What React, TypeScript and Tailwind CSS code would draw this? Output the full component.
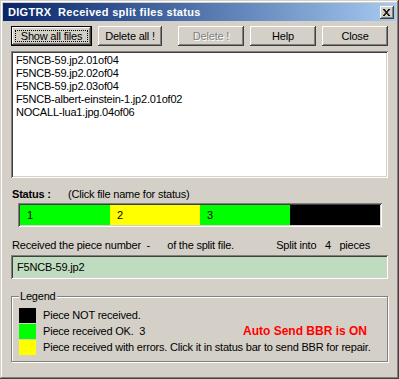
import React from 'react';

const raised =
  'shadow-[inset_-1px_-1px_#404040,inset_1px_1px_#ffffff,inset_-2px_-2px_#808080,inset_2px_2px_#d4d0c8]';
const sunken =
  'shadow-[inset_1px_1px_#808080,inset_-1px_-1px_#ffffff,inset_2px_2px_#404040,inset_-2px_-2px_#d4d0c8]';

const files = [
  'F5NCB-59.jp2.01of04',
  'F5NCB-59.jp2.02of04',
  'F5NCB-59.jp2.03of04',
  'F5NCB-albert-einstein-1.jp2.01of02',
  'NOCALL-lua1.jpg.04of06',
];

// segments of the status bar
const pieces = [
  { n: '1', color: 'bg-[#00ff00]' },
  { n: '2', color: 'bg-[#ffff00]' },
  { n: '3', color: 'bg-[#00ff00]' },
  { n: '', color: 'bg-black' },
];

function Btn({ label, w, disabled, isDefault }: { label: string; w: string; disabled?: boolean; isDefault?: boolean }) {
  if (isDefault) {
    return (
      <div className={`${w} h-[20px] border border-black bg-[#d4d0c8] p-0 ${raised}`}>
        <div className={`h-full w-full ${raised} p-[3px]`}>
          <div className="h-full w-full border border-dotted border-black flex items-center justify-center">
            {label}
          </div>
        </div>
      </div>
    );
  }
  return (
    <div
      className={`${w} h-[20px] bg-[#d4d0c8] ${raised} flex items-center justify-center ${
        disabled ? 'text-[#808080] [text-shadow:1px_1px_#ffffff]' : ''
      }`}
    >
      {label}
    </div>
  );
}

export default function App() {
  return (
    <div
      className="w-[399px] h-[379px] bg-[#d4d0c8] p-[3px] text-[11px] leading-[13px] tracking-[-0.2px] text-black shadow-[inset_-1px_-1px_#404040,inset_1px_1px_#d4d0c8,inset_-2px_-2px_#808080,inset_2px_2px_#ffffff] overflow-hidden"
      style={{ fontFamily: '"Liberation Sans", Arial, sans-serif' }}
    >
      {/* title bar */}
      <div className="h-[18px] flex items-center justify-between bg-gradient-to-r from-[#0a246a] to-[#a6caf0] pl-[5px] pr-[2px]">
        <span className="text-white font-bold text-[11px] tracking-[0.3px]">
          DIGTRX&nbsp; Received split files status
        </span>
        <div className={`w-[14px] h-[13px] bg-[#d4d0c8] ${raised} flex items-center justify-center`}>
          <svg width="8" height="7" viewBox="0 0 8 7">
            <path d="M0 0l6 7M1 0l6 7M6 0l-6 7M7 0l-6 7" stroke="black" strokeWidth="1" />
          </svg>
        </div>
      </div>

      <div className="px-[8px]">
        {/* buttons */}
        <div className="mt-[5px] flex items-center">
          <Btn label="Show all files" w="w-[82px]" isDefault />
          <div className="ml-[6px]">
            <Btn label="Delete all !" w="w-[64px]" />
          </div>
          <div className="ml-[16px]">
            <Btn label="Delete !" w="w-[66px]" disabled />
          </div>
          <div className="ml-[6px]">
            <Btn label="Help" w="w-[66px]" />
          </div>
          <div className="ml-[6px]">
            <Btn label="Close" w="w-[66px]" />
          </div>
        </div>

        {/* file list */}
        <div className={`mt-[5px] h-[127px] bg-white ${sunken} pl-[5px] pt-[3px]`}>
          {files.map((f) => (
            <div key={f} className="h-[13px] flex items-center">
              {f}
            </div>
          ))}
        </div>

        {/* status */}
        <div className="mt-[10px] h-[13px] flex items-center pl-[1px]">
          <span className="font-bold w-[56px]">Status :</span>
          <span>(Click file name for status)</span>
        </div>
        <div className={`mt-[2px] ml-[7px] w-[364px] h-[24px] p-[2px] flex ${sunken}`}>
          {pieces.map((p, i) => (
            <div key={i} className={`w-[90px] h-full ${p.color} flex items-center pl-[7px]`}>
              {p.n}
            </div>
          ))}
        </div>

        <div className="mt-[12px] h-[13px] flex items-center pl-[1px]">
          <span>Received the piece number&nbsp; -&nbsp; &nbsp; &nbsp; of the split file.</span>
          <span className="ml-auto mr-[18px]">Split into&nbsp;&nbsp; 4&nbsp;&nbsp; pieces</span>
        </div>
        <div className={`mt-[3px] h-[24px] bg-[#c0dcc0] ${sunken} flex items-center pl-[6px]`}>
          F5NCB-59.jp2
        </div>

        {/* legend */}
        <div className="relative mt-[17px] h-[66px] border border-[#808080] shadow-[inset_1px_1px_#ffffff,1px_1px_#ffffff] pl-[7px] pt-[11px]">
          <span className="absolute left-[7px] top-[-7px] bg-[#d4d0c8] px-[1px]">Legend</span>
          <div className="flex flex-col gap-[1px]">
            <div className="flex items-center h-[15px]">
              <div className="w-[17px] h-[15px] bg-black" />
              <span className="ml-[7px]">Piece NOT received.</span>
            </div>
            <div className="flex items-center h-[15px]">
              <div className="w-[17px] h-[15px] bg-[#00ff00]" />
              <span className="ml-[7px]">Piece received OK.&nbsp; 3</span>
              <span className="ml-auto mr-[20px] font-bold text-[#ff0000] text-[12px] tracking-[0px]">
                Auto Send BBR is ON
              </span>
            </div>
            <div className="flex items-center h-[15px]">
              <div className="w-[17px] h-[15px] bg-[#ffff00]" />
              <span className="ml-[7px]">Piece received with errors. Click it in status bar to send BBR for repair.</span>
            </div>
          </div>
        </div>
      </div>
    </div>
  );
}
